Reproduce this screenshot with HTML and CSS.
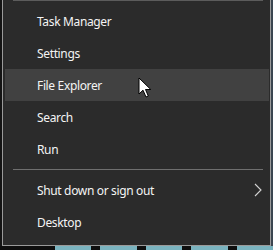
FILE: index.html
```html
<!DOCTYPE html>
<html lang="en">
<head>
  <meta charset="UTF-8" />
  <meta name="viewport" content="width=device-width, initial-scale=1.0"/>
  <title>Quick Link Menu</title>
  <link rel="stylesheet" href="styles.css">
</head>
<body>

<div class="screen">
  <div class="menu">
    <div class="sep sep-top"></div>
    <div class="item">Task Manager</div>
    <div class="item">Settings</div>
    <div class="item hover">File Explorer</div>
    <div class="item">Search</div>
    <div class="item">Run</div>
    <div class="sep"></div>
    <div class="item sub">
      <span>Shut down or sign out</span>
      <svg class="chev" width="8" height="14" viewBox="0 0 8 14">
        <path d="M1 1 L7 7 L1 13" fill="none" stroke="#d4d4d4" stroke-width="1.1"/>
      </svg>
    </div>
    <div class="item">Desktop</div>
  </div>
  <div class="side"></div>
</div>

<div class="taskbar">
  <div class="tile"></div>
  <div class="tile"></div>
  <div class="tile"></div>
  <div class="tile"></div>
  <div class="tile"></div>
</div>

<!-- mouse pointer over File Explorer -->
<svg class="cursor" width="14" height="21" viewBox="0 0 14 21">
  <path d="M1 1 L1 17 L5 13.2 L8 20 L10.3 19 L7.5 12.5 L12.8 12.5 Z" fill="#fff" stroke="#000" stroke-width="1" stroke-linejoin="round"/>
</svg>

</body>
</html>
```

FILE: styles.css
```css
  body {
    margin: 0;
    background-color: #141414;
    font-family: "Noto Sans", "Open Sans", sans-serif;
    width: 273px;
    height: 250px;
    overflow: hidden;
    position: relative;
  }
  .screen {
    display: flex;
    height: 246px;
    padding-left: 2px;
  }
  .menu {
    width: 264px;
    background-color: #2b2b2b;
    border: 1px solid #9a9a9a;
    border-top: none;
    padding: 0 1px 0 2px;
  }
  .side {
    flex: 1;
    background-color: #3b4650;
  }
  .sep {
    height: 1px;
    margin: 4px 6px 4px 8px;
    background-color: #6f6f6f;
  }
  .sep-top {
    margin-top: 0;
    margin-bottom: 4px;
    background-color: #5c5c5c;
  }
  .item {
    height: 32px;
    display: flex;
    align-items: center;
    padding-left: 32px;
    color: #f4f4f4;
    font-size: 12px;
    letter-spacing: -0.35px;
  }
  .item.hover {
    background-color: #414141;
  }
  .item.sub {
    justify-content: space-between;
    padding-right: 7px;
  }
  .chev {
    display: block;
  }
  .taskbar {
    display: flex;
    gap: 9px;
    height: 4px;
    padding-left: 55px;
    background-color: #0e0e0e;
  }
  .tile {
    width: 40px;
    background-color: #7ab3bf;
  }
  .cursor {
    position: absolute;
    left: 138px;
    top: 77px;
  }
```
